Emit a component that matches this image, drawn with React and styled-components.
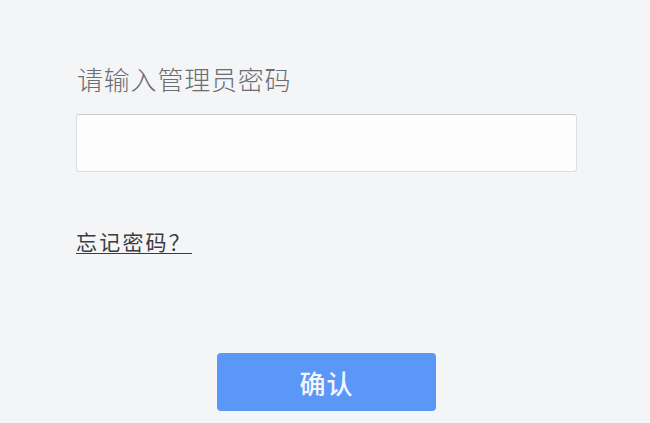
import React, { useState } from "react";
import styled, { createGlobalStyle } from "styled-components";

const GlobalStyle = createGlobalStyle`
    html, body {
        margin: 0;
        padding: 0;
        background: #f4f5f7;
    }
    body {
        font-family: "Noto Sans CJK SC", "Noto Sans", sans-serif;
    }
`;

const Page = styled.div`
    width: 650px;
    height: 423px;
    box-sizing: border-box;
    padding: 62px 0 0 76px;
    display: flex;
    flex-direction: column;
    background: #f4f5f7;
`;

const Label = styled.label`
    font-size: 26px;
    line-height: 34px;
    font-weight: 300;
    letter-spacing: 0.8px;
    color: #6a6d72;
    margin-left: 1px;
`;

const PasswordInput = styled.input`
    width: 501px;
    height: 58px;
    box-sizing: border-box;
    margin-top: 18px;
    border: 1px solid #dcdde0;
    border-top-color: #c9cacd;
    border-radius: 3px;
    background: #fdfdfe;
    outline: none;
    padding: 0 12px;
    font-size: 20px;
`;

const ForgotLink = styled.a`
    align-self: flex-start;
    margin-top: 55px;
    font-size: 21px;
    line-height: 28px;
    letter-spacing: 2.2px;
    color: #3a3c40;
    text-decoration: underline;
    text-underline-offset: 3px;
    text-decoration-thickness: 1px;
    cursor: pointer;
`;

const Actions = styled.div`
    width: 501px;
    display: flex;
    justify-content: flex-start;
    margin-top: 98px;
    padding-left: 141px;
    box-sizing: border-box;
`;

const ConfirmButton = styled.button`
    width: 219px;
    height: 58px;
    border: none;
    border-radius: 4px;
    background: #5b97f6;
    color: #f3f6fd;
    font-family: "Noto Sans CJK SC", sans-serif;
    font-size: 26px;
    font-weight: 500;
    letter-spacing: 1px;
    cursor: pointer;
`;

export default function App() {
    const [pwd, setPwd] = useState("");

    return (
        <>
            <GlobalStyle />
            <Page>
                <Label htmlFor="admin-pwd">请输入管理员密码</Label>
                <PasswordInput
                    id="admin-pwd"
                    type="password"
                    value={pwd}
                    onChange={(e) => setPwd(e.target.value)}
                />
                <ForgotLink>忘记密码？</ForgotLink>
                <Actions>
                    <ConfirmButton type="button">确认</ConfirmButton>
                </Actions>
            </Page>
        </>
    );
}
